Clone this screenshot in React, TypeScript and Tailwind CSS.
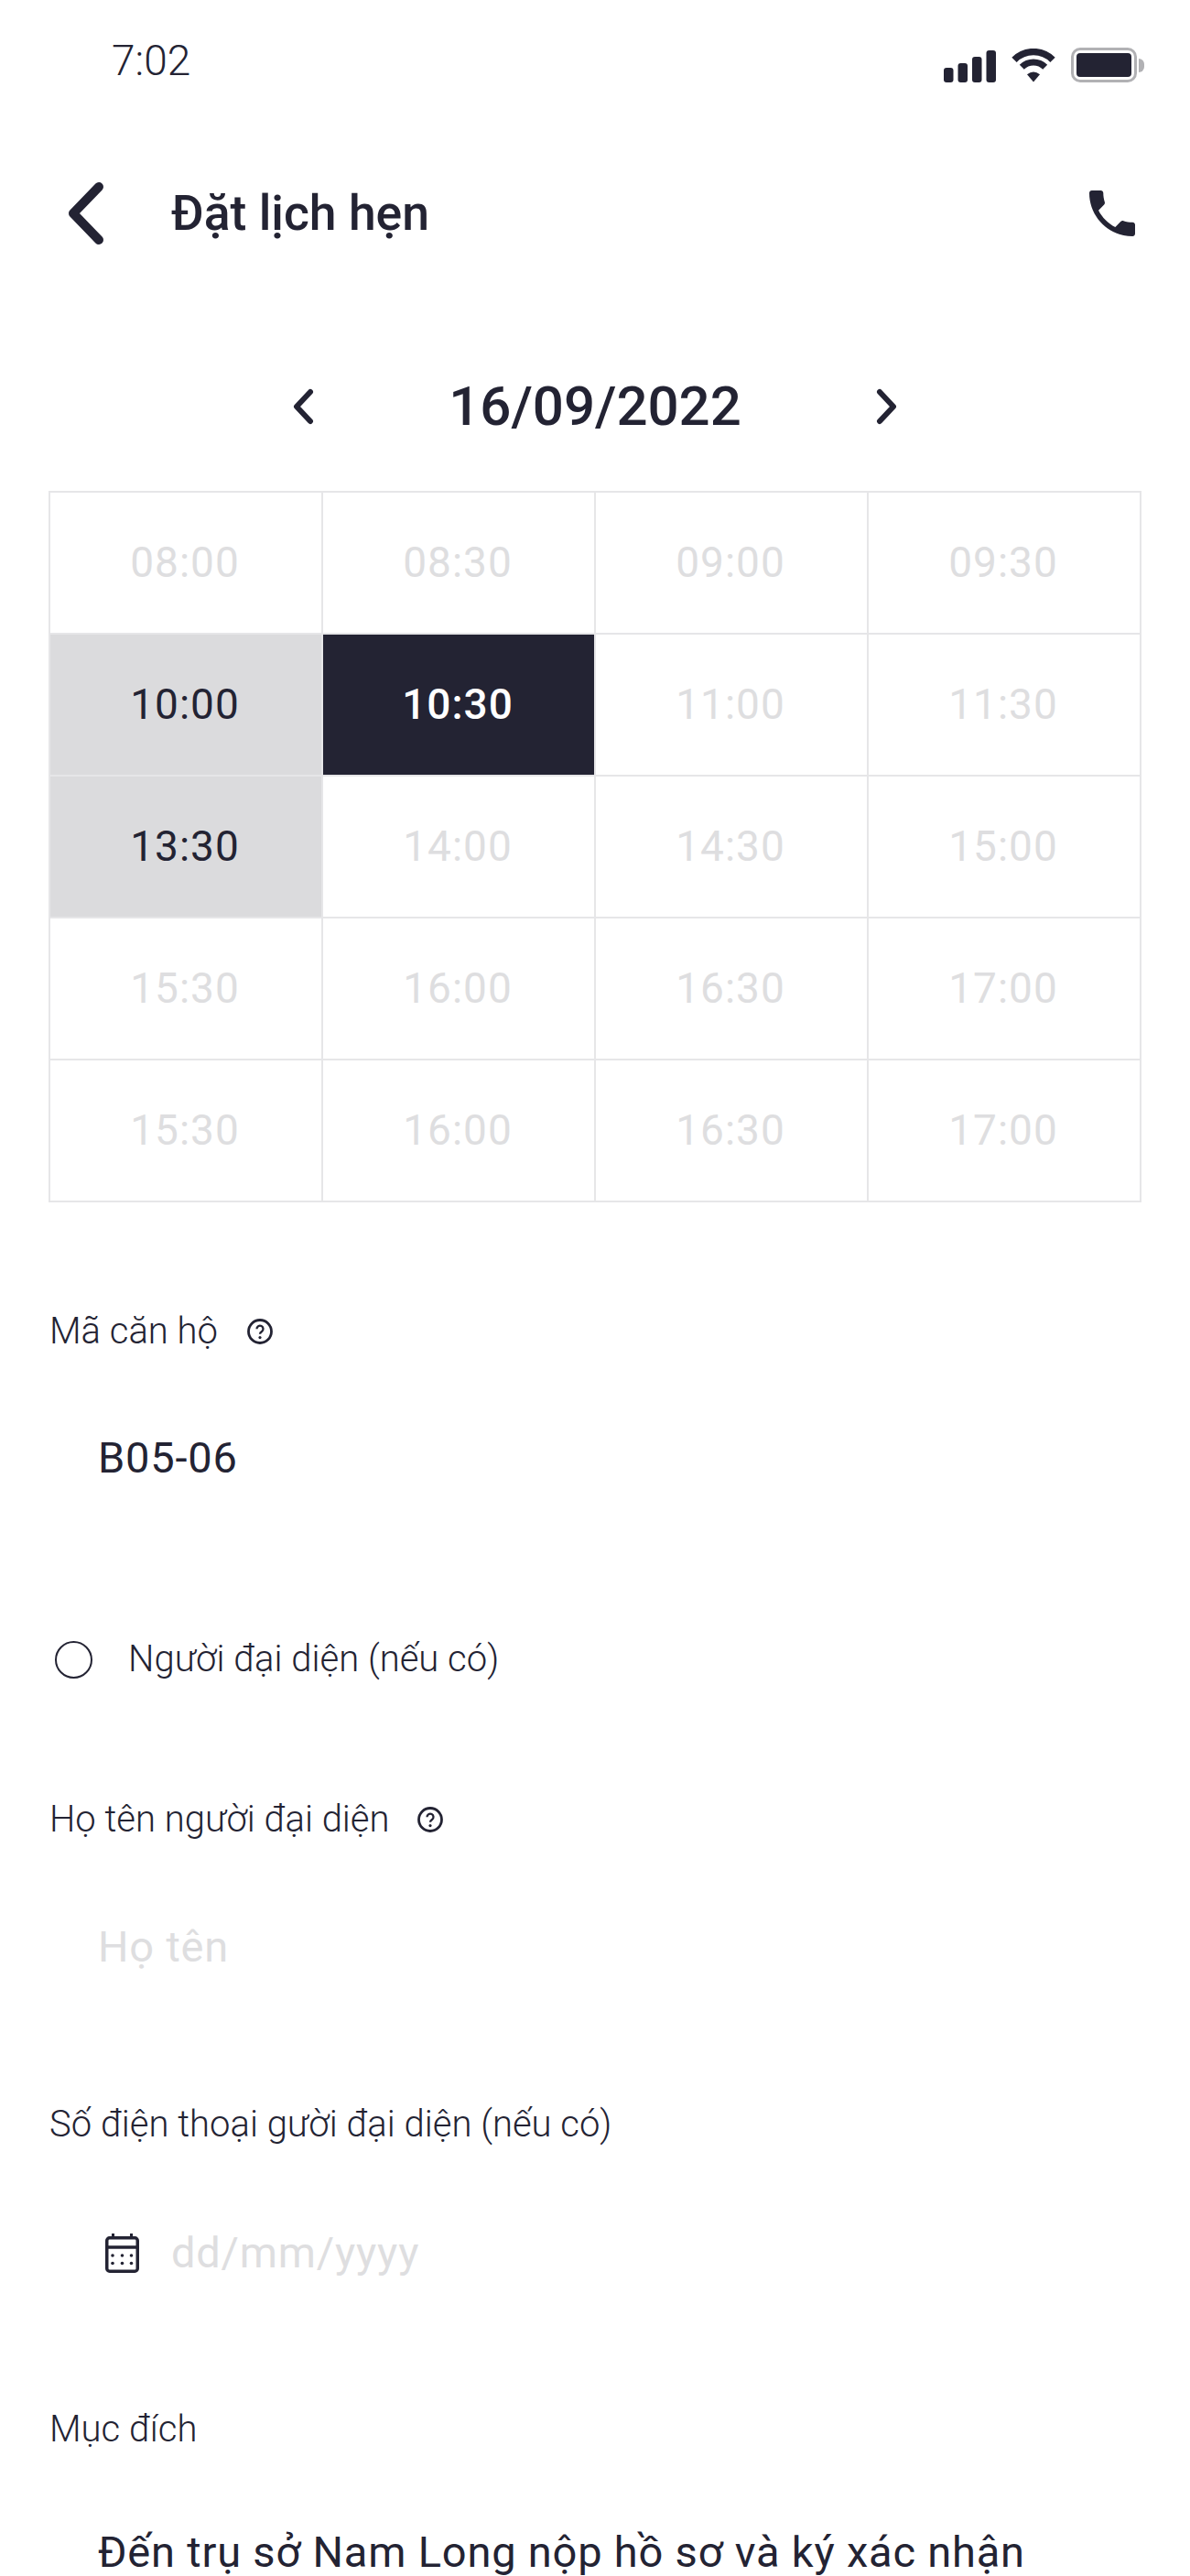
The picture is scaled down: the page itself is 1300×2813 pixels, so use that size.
const slots = [
  "08:00", "08:30", "09:00", "09:30",
  "10:00", "10:30", "11:00", "11:30",
  "13:30", "14:00", "14:30", "15:00",
  "15:30", "16:00", "16:30", "17:00",
  "15:30", "16:00", "16:30", "17:00",
];

const slotStyle = (index: number) => {
  if (index === 5) return "bg-[#232333] text-white font-medium";
  if (index === 4 || index === 8) return "bg-[#dbdbdd] text-[#232333]";
  return "text-[#dedee0]";
};

const HelpIcon = () => (
  <svg viewBox="0 0 28 28" className="w-[28px] h-[28px]" fill="none" stroke="#232333">
    <circle cx="14" cy="14" r="12.5" strokeWidth="2.8" />
    <path d="M10.5 11.2a3.5 3.5 0 1 1 5.5 2.8c-1.3.9-2 1.4-2 2.8" strokeWidth="2.3" />
    <circle cx="14" cy="20.6" r="1.6" fill="#232333" stroke="none" />
  </svg>
);

const StatusIcons = () => (
  <div className="flex items-center gap-[16px] mt-[10px]">
    <svg viewBox="0 0 57 35" className="w-[57px] h-[35px] mt-[2px]" fill="#232333">
      <rect x="0" y="19" width="10.5" height="16" rx="3" />
      <rect x="15.5" y="14" width="10.5" height="21" rx="3" />
      <rect x="31" y="7" width="10.5" height="28" rx="3" />
      <rect x="46.5" y="0" width="10.5" height="35" rx="3" />
    </svg>
    <svg viewBox="0 0 50 37" className="w-[50px] h-[37px]" fill="none" stroke="#232333">
      <path d="M4 12.4A29.5 29.5 0 0 1 46 12.4" strokeWidth="7.5" />
      <path d="M12.3 20.3A18 18 0 0 1 37.7 20.3" strokeWidth="7" />
      <path d="M18 28.3Q25 22.8 32 28.3L25 36.5Z" fill="#232333" stroke="none" />
    </svg>
    <div className="flex items-center">
      <div className="w-[72px] h-[38px] rounded-[10px] border-[3px] border-[#b1b1b4] p-[3px]">
        <div className="w-full h-full rounded-[4px] bg-[#232333]" />
      </div>
      <div className="w-[6px] h-[15px] rounded-r-[6px] bg-[#b1b1b4] ml-[2px]" />
    </div>
  </div>
);

export default function App() {
  return (
    <div className="w-[1300px] h-[2813px] overflow-hidden bg-white text-[#232333] font-['Roboto',sans-serif]">
      <div className="h-[132px] pl-[122px] pr-[50px] flex items-center justify-between">
        <span className="text-[46px] font-light">7:02</span>
        <StatusIcons />
      </div>

      <div className="h-[202px] pl-[70px] pr-[54px] flex items-center">
        <svg viewBox="0 0 48 68" className="w-[48px] h-[68px]" fill="none" stroke="#232333" strokeWidth="10" strokeLinecap="round" strokeLinejoin="round">
          <path d="M38 5L10 34L38 63" />
        </svg>
        <h1 className="ml-[69px] flex-1 text-[53.5px] font-medium">Đặt lịch hẹn</h1>
        <svg viewBox="3 3 18 18" className="w-[50px] h-[50px] mr-[6px]" fill="#232333">
          <path d="M6.62 10.79c1.44 2.83 3.76 5.14 6.59 6.59l2.2-2.2c.27-.27.67-.36 1.02-.24 1.12.37 2.33.57 3.57.57.55 0 1 .45 1 1V20c0 .55-.45 1-1 1-9.39 0-17-7.61-17-17 0-.55.45-1 1-1h3.5c.55 0 1 .45 1 1 0 1.25.2 2.45.57 3.57.11.35.03.74-.25 1.02l-2.2 2.2z" />
        </svg>
      </div>

      <div className="mt-[16px] h-[186px] flex items-start justify-center">
        <div className="mt-[74px] w-[662px] h-[40px] flex items-center justify-between">
          <svg viewBox="0 0 24 40" className="w-[24px] h-[40px]" fill="none" stroke="#232333" strokeWidth="6" strokeLinecap="round" strokeLinejoin="round">
            <path d="M20 4L5 20L20 36" />
          </svg>
          <span className="text-[60px] font-medium leading-none">16/09/2022</span>
          <svg viewBox="0 0 24 40" className="w-[24px] h-[40px]" fill="none" stroke="#232333" strokeWidth="6" strokeLinecap="round" strokeLinejoin="round">
            <path d="M4 4L19 20L4 36" />
          </svg>
        </div>
      </div>

      <div className="mx-[53px] grid grid-cols-4 border-t-2 border-l-2 border-[#e6e6e8]">
        {slots.map((slot, index) => (
          <div
            key={index}
            className={`h-[155px] pr-[2px] flex items-center justify-center border-r-2 border-b-2 border-[#e6e6e8] text-[46px] tracking-[1px] ${slotStyle(index)}`}
          >
            {slot}
          </div>
        ))}
      </div>

      <div className="px-[54px]">
        <div className="mt-[111px] h-[60px] flex items-center gap-[32px]">
          <span className="text-[40px] font-light">Mã căn hộ</span>
          <HelpIcon />
        </div>
        <div className="mt-[78px] h-[60px] pl-[53px] flex items-center text-[47px] tracking-[0.8px]">B05-06</div>

        <div className="mt-[160px] h-[60px] pl-[6px] flex items-center gap-[39px]">
          <div className="w-[41px] h-[41px] rounded-full border-[2.5px] border-[#232333]" />
          <span className="text-[40px] font-light">Người đại diện (nếu có)</span>
        </div>

        <div className="mt-[115px] h-[60px] flex items-center gap-[30px]">
          <span className="text-[40px] font-light">Họ tên người đại diện</span>
          <HelpIcon />
        </div>
        <div className="mt-[79px] h-[60px] pl-[53px] flex items-center text-[47px] tracking-[0.8px] text-[#dedee0]">Họ tên</div>

        <div className="mt-[134px] h-[60px] flex items-center">
          <span className="text-[40px] font-light">Số điện thoại gười đại diện (nếu có)</span>
        </div>
        <div className="mt-[80px] h-[60px] pl-[61px] flex items-center gap-[35px]">
          <svg viewBox="0 0 37 43" className="w-[37px] h-[43px]" fill="none" stroke="#232333">
            <rect x="1.75" y="4.75" width="33.5" height="36.5" rx="3" strokeWidth="3.5" />
            <path d="M2 15H35" strokeWidth="3.5" />
            <path d="M8.5 0V5M28.5 0V5" strokeWidth="3" />
            <g fill="#232333" stroke="none">
              <circle cx="8" cy="24" r="1.8" />
              <circle cx="18.5" cy="24" r="1.8" />
              <circle cx="28.5" cy="24" r="1.8" />
              <circle cx="8" cy="32.5" r="1.8" />
              <circle cx="18.5" cy="32.5" r="1.8" />
              <circle cx="28.5" cy="32.5" r="1.8" />
            </g>
          </svg>
          <span className="text-[47px] tracking-[0.8px] text-[#dedee0]">dd/mm/yyyy</span>
        </div>

        <div className="mt-[133px] h-[60px] flex items-center">
          <span className="text-[40px] font-light">Mục đích</span>
        </div>
        <div className="mt-[74px] h-[60px] pl-[53px] flex items-center text-[47px] tracking-[0.8px] whitespace-nowrap">
          Đến trụ sở Nam Long nộp hồ sơ và ký xác nhận
        </div>
      </div>
    </div>
  );
}
